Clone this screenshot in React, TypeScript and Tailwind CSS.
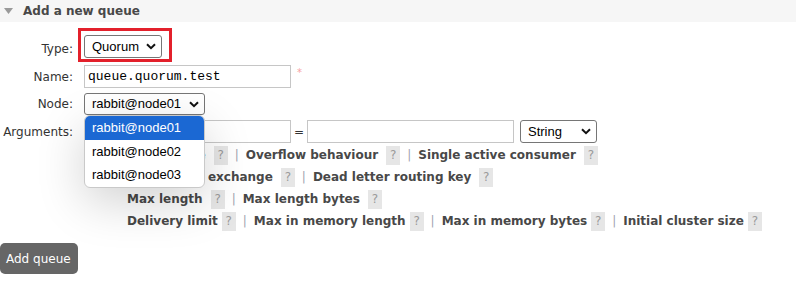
import React from 'react'

// Add a new queue — quorum form with the Node dropdown opened

const VERDANA = "font-['DejaVu_Sans',Verdana,sans-serif]"
const ARIAL = "font-['Liberation_Sans',Arial,sans-serif]"

function Chevron() {
  return (
    <svg width="10" height="7" viewBox="0 0 10 7" aria-hidden>
      <path d="M1 1.2 L5 5.2 L9 1.2" fill="none" stroke="#111" strokeWidth="2" />
    </svg>
  )
}

function FakeSelect({ value, width, height }: { value: string; width: string; height: string }) {
  return (
    <div
      className={`${ARIAL} ${width} ${height} flex items-center justify-between border border-[#767676] rounded-[3px] bg-white pl-[7px] pr-[5px] text-[13px] text-black`}
    >
      <span>{value}</span>
      <Chevron />
    </div>
  )
}

function TextInput({ value }: { value?: string }) {
  return (
    <div className="w-[207px] h-[23px] border border-[#c6c6c6] bg-white pl-[3px] flex items-center font-['Liberation_Mono','Courier_New',monospace] text-[13px] text-black">
      {value}
    </div>
  )
}

function Help() {
  return (
    <span className="inline-flex w-[14px] h-[19px] items-center justify-center bg-[#e6e6e6] text-[#9a9a9a] font-normal">
      ?
    </span>
  )
}

function Pipe() {
  return <span className="px-[7px] text-[#a0a4b0] font-normal">|</span>
}

const LINK_ROWS: string[][] = [
  ['Auto expire', 'Overflow behaviour', 'Single active consumer'],
  ['Dead letter exchange', 'Dead letter routing key'],
  ['Max length', 'Max length bytes'],
  ['Delivery limit', 'Max in memory length', 'Max in memory bytes', 'Initial cluster size'],
]

const NODES = ['rabbit@node01', 'rabbit@node02', 'rabbit@node03']

export default function App() {
  return (
    <div className={`${VERDANA} relative w-[796px] h-[290px] overflow-hidden bg-white text-[12px] text-[#484848]`}>
      {/* section header */}
      <div className="h-[22px] bg-[#f6f6f6] flex items-center">
        <svg className="ml-[4px]" width="9" height="6" viewBox="0 0 9 6" aria-hidden>
          <polygon points="0,0 9,0 4.5,6" fill="#9a9a9a" />
        </svg>
        <span className="ml-[10px] font-bold text-[#484848]">Add a new queue</span>
      </div>

      {/* Type */}
      <div className="mt-[6px] h-[34px] flex">
        <div className="w-[73px] text-right text-[#333] pt-[12px]">Type:</div>
        <div className="ml-[5px] border-[3px] border-[#e3202b] pl-[3px] pr-[7px] pt-[4px] pb-[1px]">
          <FakeSelect value="Quorum" width="w-[78px]" height="h-[23px]" />
        </div>
      </div>

      {/* Name */}
      <div className="mt-[3px] h-[23px] flex items-center">
        <div className="w-[73px] text-right text-[#333]">Name:</div>
        <div className="ml-[11px] flex">
          <TextInput value="queue.quorum.test" />
          <span className="ml-[6px] text-[10px] text-[#f7a3a3]">*</span>
        </div>
      </div>

      {/* Node */}
      <div className="mt-[5px] h-[22px] flex items-center">
        <div className="w-[73px] text-right text-[#333]">Node:</div>
        <div className="ml-[11px]">
          <FakeSelect value="rabbit@node01" width="w-[121px]" height="h-[22px]" />
        </div>
      </div>

      {/* Arguments */}
      <div className="mt-[5px] h-[23px] flex items-center">
        <div className="w-[73px] text-right text-[#333]">Arguments:</div>
        <div className="ml-[11px] flex items-center">
          <TextInput />
          <span className="w-[16px] text-center text-[#333]">=</span>
          <TextInput />
          <div className="ml-[6px]">
            <FakeSelect value="String" width="w-[77px]" height="h-[23px]" />
          </div>
        </div>
      </div>

      {/* argument shortcuts */}
      <div className="ml-[127px] mt-[1px] font-bold">
        {LINK_ROWS.map((row, r) => (
          <div key={r} className="h-[22px] flex items-center whitespace-nowrap">
            {row.map((label, i) => (
              <React.Fragment key={label}>
                {i > 0 && <Pipe />}
                <span>{label}</span>
                <span className={r === 3 ? 'ml-[4px]' : 'ml-[8px]'}>
                  <Help />
                </span>
              </React.Fragment>
            ))}
          </div>
        ))}
      </div>

      {/* submit */}
      <div className="mt-[11px]">
        <button className="h-[31px] w-[78px] rounded-[5px] bg-[#666] text-white text-[12px] px-[6px] text-left">
          Add queue
        </button>
      </div>

      {/* open Node dropdown */}
      <div className={`${ARIAL} absolute left-[84px] top-[115px] w-[121px] h-[73px] bg-white border border-[#c9c9c9] rounded-[6px] overflow-hidden shadow-[0_14px_48px_rgba(0,0,0,0.18)] text-[13px] text-black`}>
        {NODES.map((n, i) => (
          <div
            key={n}
            className={[
              'h-[23.6px] flex items-center pl-[7px]',
              i === 0 ? 'bg-[#1b68d3] text-white' : '',
            ].join(' ')}
          >
            {n}
          </div>
        ))}
      </div>
    </div>
  )
}
